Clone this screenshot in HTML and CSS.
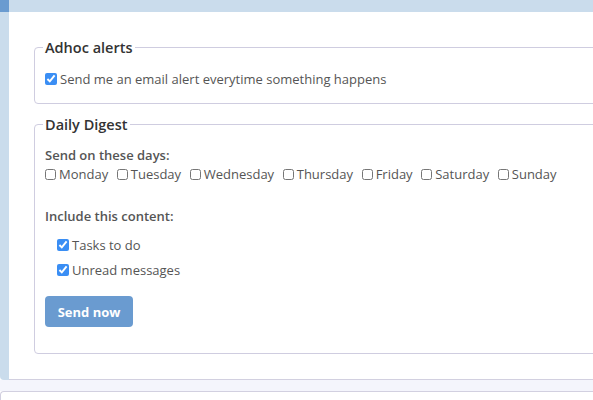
FILE: index.html
```html
<!DOCTYPE html>
<html>
<head>
<meta charset="utf-8">
<link rel="stylesheet" href="styles.css">
</head>
<body>
<div class="page">
  <div class="corner"></div>
  <div class="topbar"></div>
  <div class="sidebar"></div>
  <div class="panel">
    <fieldset class="group">
      <legend>Adhoc alerts</legend>
      <label class="check"><input type="checkbox" checked> Send me an email alert everytime something happens</label>
    </fieldset>
    <fieldset class="group digest">
      <legend>Daily Digest</legend>
      <div class="label">Send on these days:</div>
      <div class="days">
        <label class="check"><input type="checkbox"> Monday</label>
        <label class="check"><input type="checkbox"> Tuesday</label>
        <label class="check"><input type="checkbox"> Wednesday</label>
        <label class="check"><input type="checkbox"> Thursday</label>
        <label class="check"><input type="checkbox"> Friday</label>
        <label class="check"><input type="checkbox"> Saturday</label>
        <label class="check"><input type="checkbox"> Sunday</label>
      </div>
      <div class="label content-label">Include this content:</div>
      <div class="content-list">
        <label class="check"><input type="checkbox" checked> Tasks to do</label>
        <label class="check"><input type="checkbox" checked> Unread messages</label>
      </div>
      <button class="send">Send now</button>
    </fieldset>
  </div>
</div>
<div class="band"></div>
<div class="next"></div>
</body>
</html>
```

FILE: styles.css
```css
html, body {
  margin: 0;
  background: #fff;
  overflow: hidden;
}
body {
  font-family: "Open Sans", sans-serif;
  font-size: 13px;
  color: #555;
}
.page {
  display: grid;
  grid-template-columns: 9px 1fr;
  grid-template-rows: 12px auto;
}
.corner { background: #6a9bd0; }
.topbar { background: #cadcec; }
.sidebar {
  background: #cadcec;
  border-bottom-left-radius: 4px;
}
.panel {
  background: #fff;
  border-bottom: 1px solid #d2d0e0;
  padding: 26px 0 25px 25px;
}
.group {
  margin: 0 -30px 11px 0;
  border: 1px solid #cfcde0;
  border-radius: 4px;
  padding: 13px 8px 14px;
}
.group.digest {
  margin-bottom: 0;
  padding-top: 5px;
  padding-bottom: 26px;
}
legend {
  padding: 0 2px;
  font-size: 14.5px;
  font-weight: 600;
  color: #333;
}
.check {
  display: inline-flex;
  align-items: center;
  line-height: 18px;
}
.check input {
  width: 12px;
  height: 12px;
  margin: 0 3px 0 2px;
  accent-color: #3a8ef4;
}
.days .check input {
  width: 11px;
  height: 11px;
  margin-right: 3px;
}
.label {
  font-weight: 600;
  margin-top: 7px;
  padding-left: 2px;
  line-height: 18px;
}
.days {
  display: flex;
  gap: 6.6px;
  margin-top: 1px;
}
.content-label { margin-top: 24px; }
.content-list {
  display: flex;
  flex-direction: column;
  gap: 7px;
  margin-top: 11px;
  padding-left: 12px;
}
.send {
  margin: 17px 0 0 2px;
  width: 88px;
  height: 31px;
  border: none;
  border-radius: 4px;
  background: #6a9bd0;
  color: #fff;
  font-family: "Open Sans", sans-serif;
  font-size: 13px;
  font-weight: 700;
}
.band {
  height: 11px;
  background: #f4f5fc;
}
.next {
  height: 8px;
  border: 1px solid #d2d0e0;
  border-right: none;
  border-bottom: none;
  border-top-left-radius: 4px;
}
```
